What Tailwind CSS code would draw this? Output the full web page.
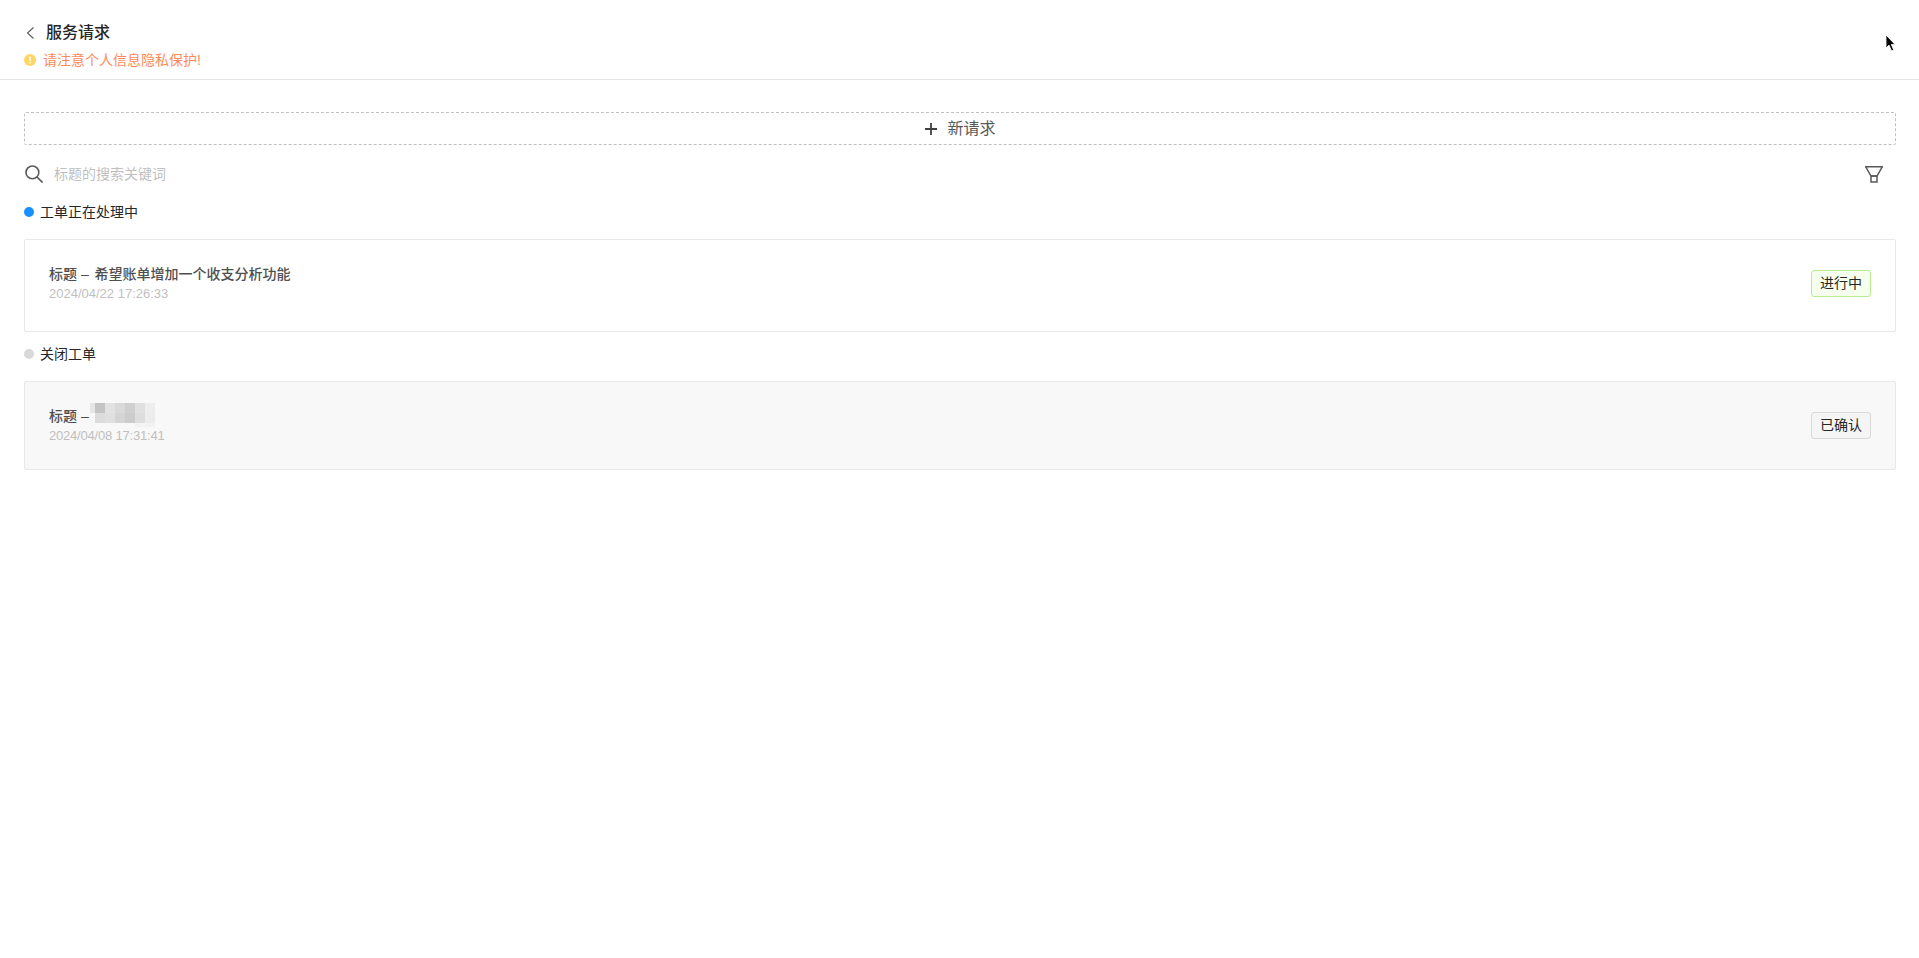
<!DOCTYPE html>
<html lang="zh-CN">
<head>
    <meta charset="UTF-8">
    <title>服务请求</title>
    <script src="https://cdn.jsdelivr.net/npm/@tailwindcss/browser@4"></script>
</head>
<body class="relative h-[958px] overflow-hidden bg-white font-['Liberation_Sans','Noto_Sans_CJK_SC',sans-serif] text-[#262626]">

    <!-- Header -->
    <header class="h-[80px] border-b border-[#e5e5e5] pl-[24px] pt-[21px]">
        <div class="flex h-[24px] items-center">
            <svg class="mr-[10px] h-[14px] w-[12px]" viewBox="0 0 12 14" fill="none" stroke="#595959" stroke-width="1.1"><path d="M9.5 1.5 3.5 7l6 5.5"/></svg>
            <h1 class="text-[16px] leading-[24px] font-medium text-[#262626]">服务请求</h1>
        </div>
        <div class="mt-[4px] flex h-[22px] items-center">
            <svg class="mr-[7px] h-[12px] w-[12px]" viewBox="0 0 12 12"><circle cx="6" cy="6" r="6" fill="#ffd666"/><rect x="5.2" y="2.6" width="1.6" height="4.2" rx=".5" fill="#fff"/><rect x="5.2" y="7.8" width="1.6" height="1.6" rx=".5" fill="#fff"/></svg>
            <span class="text-[14px] leading-[22px] text-[#ff7a45]/90">请注意个人信息隐私保护!</span>
        </div>
    </header>

    <main class="pt-[32px] pr-[23px] pl-[24px]">
        <!-- New request -->
        <button class="flex h-[33px] w-[1872px] items-center justify-center rounded-[2px] border border-dashed border-[#bfbfbf] text-[16px] text-[#595959]">
            <svg class="mr-[9px] h-[14px] w-[14px]" viewBox="0 0 14 14" stroke="#404040" stroke-width="1.8"><path d="M7 1v12M1 7h12"/></svg>
            新请求
        </button>

        <!-- Search -->
        <div class="mt-[13px] flex h-[32px] items-center">
            <svg class="mr-[11px] ml-[1px] h-[18px] w-[18px]" viewBox="0 0 18 18" fill="none" stroke="#595959" stroke-width="1.6"><circle cx="7.4" cy="7.4" r="6.4"/><path d="m12 12 5.6 5.6"/></svg>
            <span class="text-[14px] text-[#bfbfbf]">标题的搜索关键词</span>
            <svg class="mr-[13px] ml-auto h-[17px] w-[18px]" viewBox="0 0 18 17" fill="none" stroke="#595959" stroke-width="1.5"><path d="M.8.8h16.4L12 10H6Z"/><path d="M6 10h6v6H6Z"/></svg>
        </div>

        <!-- In progress -->
        <div class="mt-[11px] flex h-[22px] items-center">
            <span class="mr-[6px] h-[10px] w-[10px] rounded-full bg-[#1890ff]"></span>
            <span class="text-[14px] leading-[22px] text-[#262626]">工单正在处理中</span>
        </div>
        <div class="mt-[16px] flex h-[93px] w-[1872px] items-center justify-between rounded-[2px] border border-[#e8e8e8] bg-white pr-[24px] pl-[24px]">
            <div class="-mt-[4px]">
                <div class="text-[14px] leading-[20px] font-medium text-[#4f4f4f]">标题 – <span class="ml-[2px]">希望账单增加一个收支分析功能</span></div>
                <div class="mt-[1px] text-[13px] leading-[18px] text-[#bfbfbf]">2024/04/22 17:26:33</div>
            </div>
            <span class="-mt-[4px] flex h-[27px] w-[60px] items-center justify-center rounded-[3px] border border-[#b7eb8f] bg-[#f6ffed] text-[14px] text-[#262626]">进行中</span>
        </div>

        <!-- Closed -->
        <div class="mt-[11px] flex h-[22px] items-center">
            <span class="mr-[6px] h-[10px] w-[10px] rounded-full bg-[#d9d9d9]"></span>
            <span class="text-[14px] leading-[22px] text-[#262626]">关闭工单</span>
        </div>
        <div class="mt-[16px] flex h-[89px] w-[1872px] items-center justify-between rounded-[2px] border border-[#e8e8e8] bg-[#f8f8f8] pr-[24px] pl-[24px]">
            <div>
                <div class="relative text-[14px] leading-[20px] font-medium text-[#4f4f4f]">
                    标题 –
                    <!-- mosaic over the blurred title -->
                    <div class="absolute top-[-3px] left-[41px] grid grid-cols-[5px_repeat(6,10px)] grid-rows-[10px_10px_4px]">
                        <i class="bg-[#e6e6e6]"></i><i class="bg-[#c4c4c4]"></i><i class="bg-[#e2e2e2]"></i><i class="bg-[#d9d9d9]"></i><i class="bg-[#cfcfcf]"></i><i class="bg-[#e0e0e0]"></i><i class="bg-[#ededed]"></i>
                        <i></i><i class="bg-[#dcdcdc]"></i><i class="bg-[#e0e0e0]"></i><i class="bg-[#d4d4d4]"></i><i class="bg-[#cccccc]"></i><i class="bg-[#dddddd]"></i><i class="bg-[#ececec]"></i>
                        <i></i><i></i><i></i><i></i><i></i><i class="bg-[#f3f3f3]"></i><i class="bg-[#f1f1f1]"></i>
                    </div>
                </div>
                <div class="relative mt-[1px] text-[13px] leading-[18px] tracking-[-0.2px] text-[#bfbfbf]">2024/04/08 17:31:41</div>
            </div>
            <span class="flex h-[27px] w-[60px] items-center justify-center rounded-[3px] border border-[#d9d9d9] bg-[#f5f5f5] text-[14px] text-[#262626]">已确认</span>
        </div>
    </main>

    <!-- Mouse pointer captured in the screenshot -->
    <svg class="absolute top-[34px] left-[1885px] h-[20px] w-[12px]" viewBox="0 0 12 20"><path d="M1 1v13l3-3 2.5 6 2.2-1-2.4-5.6H10Z" fill="#000" stroke="#fff" stroke-width=".8"/></svg>

</body>
</html>
